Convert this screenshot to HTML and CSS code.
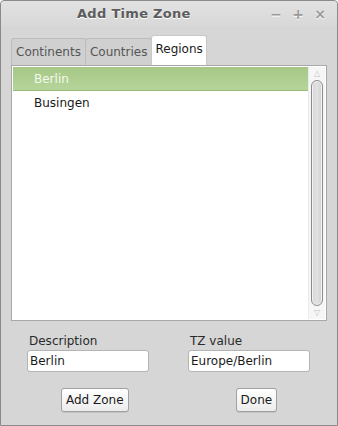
FILE: index.html
```html
<!DOCTYPE html>
<html lang="en">
<head>
    <meta charset="UTF-8">
    <title>Add Time Zone</title>
    <link rel="stylesheet" href="styles.css">
</head>
<body>
    <div id="window">
        <div id="titlebar">
            <span id="title">Add Time Zone</span>
            <div id="window-buttons">
                <span class="wbtn">&#8722;</span>
                <span class="wbtn">+</span>
                <span class="wbtn">&#215;</span>
            </div>
        </div>

        <div id="content">
            <div id="tabs">
                <div class="tab">Continents</div>
                <div class="tab">Countries</div>
                <div class="tab active">Regions</div>
            </div>

            <div id="list-box">
                <div id="list">
                    <div class="item selected">Berlin</div>
                    <div class="item">Busingen</div>
                </div>
                <div id="scrollbar">
                    <div class="arrow">&#9651;</div>
                    <div id="thumb"></div>
                    <div class="arrow">&#9661;</div>
                </div>
            </div>

            <div id="fields">
                <div class="field">
                    <label>Description</label>
                    <input type="text" value="Berlin">
                </div>
                <div class="field">
                    <label>TZ value</label>
                    <input type="text" value="Europe/Berlin">
                </div>
            </div>

            <div id="actions">
                <button id="add-button">Add Zone</button>
                <button id="done-button">Done</button>
            </div>
        </div>
    </div>
</body>
</html>
```

FILE: styles.css
```css
body {
    margin: 0;
    padding: 0;
    font-family: "DejaVu Sans", sans-serif;
    font-size: 12px;
    color: #222222;
    background-color: #ffffff;
}

#window {
    width: 336px;
    height: 424px;
    border: 1px solid #8a8a8a;
    border-radius: 4px 4px 0 0;
    background-color: #d6d6d6;
    display: flex;
    flex-direction: column;
}

#titlebar {
    height: 25px;
    display: flex;
    align-items: center;
    background: linear-gradient(#e2e2e2, #d8d8d8);
    border-radius: 4px 4px 0 0;
}

#title {
    margin-left: 76px;
    font-weight: bold;
    font-size: 13px;
    color: #5c5c5c;
    text-shadow: 0 1px 0 #ffffff;
    letter-spacing: 0.3px;
}

#window-buttons {
    margin-left: auto;
    margin-right: 11px;
    display: flex;
    gap: 10px;
}

.wbtn {
    width: 12px;
    text-align: center;
    font-weight: bold;
    font-size: 14px;
    color: #9a9a9a;
    text-shadow: 0 1px 0 #ffffff;
}

#content {
    flex: 1;
    padding: 10px 10px 0 10px;
    display: flex;
    flex-direction: column;
}

#tabs {
    display: flex;
    align-items: flex-end;
    height: 29px;
}

.tab {
    height: 26px;
    line-height: 26px;
    padding: 0 4px;
    border: 1px solid #bcbcbc;
    border-bottom: none;
    border-radius: 3px 3px 0 0;
    background-color: #d0d0d0;
    color: #555555;
    font-size: 12px;
}

.tab + .tab {
    margin-left: -1px;
}

.tab.active {
    height: 29px;
    line-height: 27px;
    padding: 0 3px;
    background-color: #ffffff;
    color: #1a1a1a;
    border-color: #c8c8c8;
}

#list-box {
    height: 252px;
    border: 1px solid #a8a8a8;
    background-color: #ffffff;
    display: flex;
    padding: 1px;
}

#list {
    flex: 1;
}

.item {
    height: 24px;
    line-height: 24px;
    padding-left: 21px;
    font-size: 12px;
    color: #1a1a1a;
}

.item.selected {
    background: linear-gradient(#a6c886, #b6d49a);
    color: #f4f8ee;
    border-bottom: 1px solid #98bd78;
    height: 23px;
}

#scrollbar {
    width: 16px;
    display: flex;
    flex-direction: column;
    align-items: center;
    background-color: #f6f6f6;
    border-left: 1px solid #ececec;
}

.arrow {
    height: 13px;
    line-height: 13px;
    font-size: 8px;
    color: #c4c4c4;
}

#thumb {
    flex: 1;
    width: 10px;
    border: 1px solid #8c8c8c;
    border-radius: 6px;
    background: linear-gradient(90deg, #d4d4d4, #e2e2e2, #d0d0d0);
    box-shadow: inset 0 0 0 1px #f4f4f4;
}

#fields {
    display: flex;
    padding: 13px 0 0 16px;
    gap: 39px;
}

.field {
    display: flex;
    flex-direction: column;
}

label {
    font-size: 12px;
    color: #2a2a2a;
    padding-left: 2px;
    height: 16px;
}

input {
    width: 116px;
    height: 18px;
    border: 1px solid #b4b4b4;
    border-radius: 3px;
    padding: 1px 2px;
    font-family: "DejaVu Sans", sans-serif;
    font-size: 12px;
    color: #1a1a1a;
    outline: none;
    margin: 0;
}

#actions {
    display: flex;
    padding: 16px 0 0 50px;
}

button {
    height: 24px;
    padding: 0 4px;
    font-family: "DejaVu Sans", sans-serif;
    font-size: 12px;
    color: #1a1a1a;
    background: linear-gradient(#ffffff, #ececec);
    border: 1px solid #a0a0a0;
    border-radius: 3px;
    box-shadow: 0 1px 0 #c4c4c4;
}

#done-button {
    margin-left: 107px;
}
```
